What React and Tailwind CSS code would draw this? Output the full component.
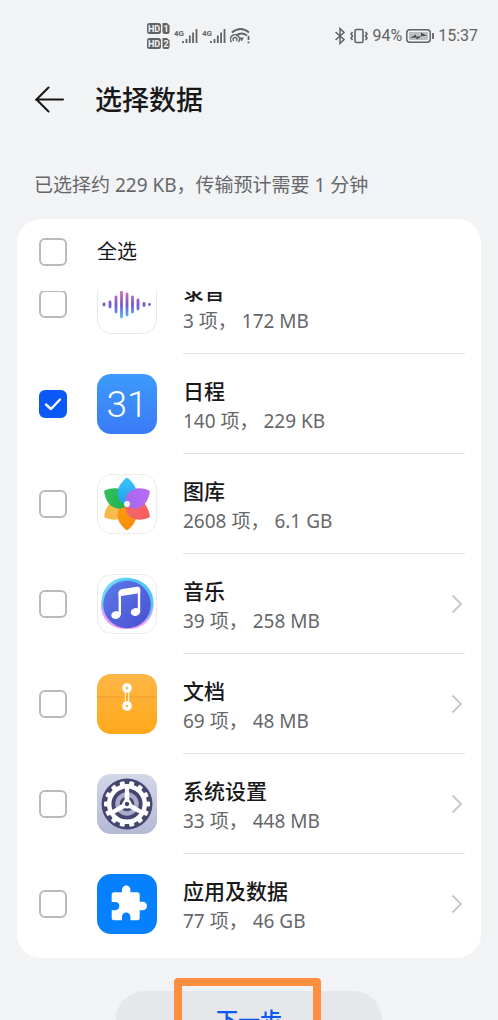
import React, { useState } from 'react';

const RecorderIcon = () => {
  const bars = [
    [7, 2], [13, 4], [19, 9], [24.5, 14], [30, 12], [35.5, 9], [41, 6], [47, 2.5], [52.5, 1.5]
  ];
  return (
    <svg viewBox="0 0 60 60" className="w-15 h-15 shrink-0">
      <defs>
        <linearGradient id="waveFill" gradientUnits="userSpaceOnUse" x1="0" y1="15" x2="0" y2="46">
          <stop offset="0" stopColor="#ee6fae" />
          <stop offset="0.5" stopColor="#7357d2" />
          <stop offset="1" stopColor="#4cc9fb" />
        </linearGradient>
      </defs>
      <rect x="0.5" y="0.5" width="59" height="59" rx="14" fill="#fff" stroke="#dfeaec" />
      {bars.map(([x, h]) => (
        <rect key={x} x={x - 1.4} y={30.5 - h} width="2.8" height={h * 2} rx="1.4" fill="url(#waveFill)" />
      ))}
    </svg>
  );
};

const CalendarIcon = () => (
  <svg viewBox="0 0 60 60" className="w-15 h-15 shrink-0">
    <defs>
      <linearGradient id="calendarFill" x1="0" y1="0" x2="0" y2="1">
        <stop offset="0" stopColor="#3d9bfb" />
        <stop offset="1" stopColor="#3a7af8" />
      </linearGradient>
    </defs>
    <rect width="60" height="60" rx="14" fill="url(#calendarFill)" />
    <text x="30" y="43" textAnchor="middle" fontSize="37" fontWeight="300" fill="#fff" className="font-['Roboto',sans-serif]">
      31
    </text>
  </svg>
);

const GalleryIcon = () => {
  const petals = [
    [240, '#f9b640', '#f3c65c'],
    [180, '#f98a08', '#fb9e14'],
    [120, '#fa5c5c', '#f2696d'],
    [300, '#35c15a', '#1faf50'],
    [0, '#38c4fb', '#239fe6'],
    [60, '#b96bf7', '#a767ee']
  ];
  return (
    <svg viewBox="0 0 60 60" className="w-15 h-15 shrink-0">
      <defs>
        {petals.map(([angle, from, to]) => (
          <linearGradient key={angle} id={`petal${angle}`} x1="0" y1="0" x2="0" y2="1">
            <stop offset="0" stopColor={from} />
            <stop offset="1" stopColor={to} />
          </linearGradient>
        ))}
      </defs>
      <rect x="0.5" y="0.5" width="59" height="59" rx="14" fill="#fff" stroke="#ededed" />
      {petals.map(([angle]) => (
        <path
          key={angle}
          d="M30 31C24 30 20.500 25 20.500 19C20.500 12.500 25 7.500 29 4.200Q30 3.400 31 4.200C35 7.500 39.500 12.500 39.500 19C39.500 25 36 30 30 31Z"
          transform={`rotate(${angle} 30 30)`}
          fill={`url(#petal${angle})`}
        />
      ))}
      <circle cx="30" cy="30" r="3" fill="#fff" />
    </svg>
  );
};

const MusicIcon = () => (
  <svg viewBox="0 0 60 60" className="w-15 h-15 shrink-0">
    <defs>
      <linearGradient id="musicFill" x1="0" y1="0" x2="1" y2="1">
        <stop offset="0" stopColor="#5a7be8" />
        <stop offset="1" stopColor="#4a4fd0" />
      </linearGradient>
    </defs>
    <rect x="0.5" y="0.5" width="59" height="59" rx="14" fill="#fff" stroke="#ededed" />
    <circle cx="27" cy="32" r="23" fill="#f29af5" />
    <circle cx="33" cy="31.5" r="23.5" fill="#f29af5" />
    <circle cx="28.5" cy="27.5" r="24" fill="#6fd3f8" />
    <circle cx="32.5" cy="28.5" r="24" fill="#56c4f6" />
    <circle cx="30" cy="30.5" r="23.8" fill="url(#musicFill)" />
    <path d="M22.8 41V18M42 37.5V15" fill="none" stroke="#fff" strokeWidth="2.4" />
    <path d="M21.600 19Q21.600 15.800 24.500 15.300L40 12.700Q43.200 12.300 43.200 15.500V19L21.600 22.500Z" fill="#fff" />
    <ellipse cx="19" cy="41" rx="4.8" ry="3.9" transform="rotate(-15 19 41)" fill="#fff" />
    <ellipse cx="38.5" cy="38" rx="4.8" ry="3.9" transform="rotate(-15 38.5 38)" fill="#fff" />
  </svg>
);

const DocumentsIcon = () => (
  <svg viewBox="0 0 60 60" className="w-15 h-15 shrink-0">
    <defs>
      <linearGradient id="documentsFill" x1="0" y1="0" x2="0" y2="1">
        <stop offset="0" stopColor="#fdb647" />
        <stop offset="1" stopColor="#ffa81a" />
      </linearGradient>
    </defs>
    <rect width="60" height="60" rx="14" fill="url(#documentsFill)" />
    <path d="M0 23H60" stroke="#ec9c2b" strokeWidth="1" />
    <path d="M28.3 14V31M31.7 14V31" stroke="#fff" strokeWidth="1" />
    <circle cx="30" cy="14" r="4.8" fill="#fff" />
    <circle cx="30" cy="32" r="4.8" fill="#fff" />
    <circle cx="30" cy="14" r="1.2" fill="#f5b04c" />
    <circle cx="30" cy="32" r="1.2" fill="#f5b04c" />
  </svg>
);

const SettingsIcon = () => (
  <svg viewBox="0 0 60 60" className="w-15 h-15 shrink-0">
    <defs>
      <linearGradient id="settingsFill" x1="0" y1="0" x2="0" y2="1">
        <stop offset="0" stopColor="#d3d7e9" />
        <stop offset="1" stopColor="#b4b9d4" />
      </linearGradient>
    </defs>
    <rect width="60" height="60" rx="14" fill="url(#settingsFill)" />
    <circle cx="30" cy="30" r="25.5" fill="#46456f" />
    {Array.from({ length: 14 }, (_, i) => (
      <rect
        key={i}
        x="27.5"
        y="7"
        width="5"
        height="6"
        rx="1"
        fill="#fff"
        transform={`rotate(${(i + 0.5) * (360 / 14)} 30 30)`}
      />
    ))}
    <circle cx="30" cy="30" r="17.8" fill="none" stroke="#fff" strokeWidth="4.4" />
    <circle cx="30" cy="30" r="9.5" fill="none" stroke="#a9acc8" strokeWidth="4.5" />
    {[0, 120, 240].map((angle) => (
      <path key={angle} d="M28 13H32L32.6 30H27.4Z" fill="#fff" transform={`rotate(${angle} 30 30)`} />
    ))}
    <circle cx="30" cy="30" r="4.6" fill="#fff" />
    <circle cx="30" cy="30" r="2.2" fill="#46456f" />
  </svg>
);

const AppsIcon = () => (
  <svg viewBox="0 0 60 60" className="w-15 h-15 shrink-0">
    <rect width="60" height="60" rx="14" fill="#0580ff" />
    <rect x="14.7" y="18.3" width="28" height="28" rx="2.5" fill="#fff" />
    <rect x="25" y="11.5" width="8.4" height="11" rx="4.2" fill="#fff" />
    <rect x="38" y="27.8" width="12" height="8.4" rx="4.2" fill="#fff" />
    <path d="M14 28H18.2A4.1 4.1 0 0 1 18.2 36.2H14Z" fill="#0580ff" />
    <path d="M25 47V42.8A4.2 4.2 0 0 1 33.4 42.8V47Z" fill="#0580ff" />
  </svg>
);

const items = [
  { id: 'recorder', name: '录音', count: '3', size: '172 MB', icon: RecorderIcon },
  { id: 'calendar', name: '日程', count: '140', size: '229 KB', icon: CalendarIcon },
  { id: 'gallery', name: '图库', count: '2608', size: '6.1 GB', icon: GalleryIcon },
  { id: 'music', name: '音乐', count: '39', size: '258 MB', icon: MusicIcon, more: true },
  { id: 'documents', name: '文档', count: '69', size: '48 MB', icon: DocumentsIcon, more: true },
  { id: 'settings', name: '系统设置', count: '33', size: '448 MB', icon: SettingsIcon, more: true },
  { id: 'apps', name: '应用及数据', count: '77', size: '46 GB', icon: AppsIcon, more: true }
];

const Checkbox = ({ id, checked, onChange }) => (
  <span className="relative w-7 h-7 shrink-0">
    <input
      id={id}
      type="checkbox"
      checked={checked}
      onChange={onChange}
      className="peer block w-7 h-7 appearance-none rounded-md border-2 border-[#bababa] bg-white checked:border-[#0a59f7] checked:bg-[#0a59f7]"
    />
    <svg viewBox="0 0 28 28" className="absolute inset-0 hidden pointer-events-none peer-checked:block">
      <path d="M7 14.5L12 19L21 9.5" fill="none" stroke="#fff" strokeWidth="2.4" strokeLinecap="round" strokeLinejoin="round" />
    </svg>
  </span>
);

const HdBadge = ({ sim }) => (
  <svg viewBox="0 0 23 11" className="w-[23px] h-[11px]">
    <rect width="14" height="11" rx="2.5" fill="#626365" />
    <text x="7" y="8.8" textAnchor="middle" fontSize="9" fontWeight="700" fill="#f1f3f5">HD</text>
    <path d="M15.5 0H20L22.5 2.5V9Q22.5 11 20.5 11H17.5Q15.5 11 15.5 9Z" fill="#626365" />
    <text x="19" y="8.8" textAnchor="middle" fontSize="9" fontWeight="700" fill="#f1f3f5">{sim}</text>
  </svg>
);

const Signal = () => (
  <svg viewBox="0 0 24 18" className="w-6 h-[18px]">
    <text x="0" y="9" fontSize="8" fontWeight="700" fill="#626365">4G</text>
    <path d="M9 16V14M12.5 16V12M15.8 16V8.500M19.1 16V5.500M22.5 16V2" stroke="#626365" strokeWidth="1.8" />
  </svg>
);

const StatusBar = () => (
  <div className="flex h-[72px] shrink-0 items-center justify-between pl-[147px] pr-5 text-[#626365] font-['Roboto',sans-serif]">
    <div className="flex items-center gap-1">
      <div className="flex flex-col gap-1">
        <HdBadge sim="1" />
        <HdBadge sim="2" />
      </div>
      <Signal />
      <Signal />
      <svg viewBox="0 0 22 18" className="w-[22px] h-[18px]" fill="none" stroke="#626365" strokeWidth="1.8">
        <path d="M2 5.5Q10.5 -1.5 19 5.5" />
        <path d="M6 8.5Q11.5 4.5 17 8.5" />
        <path d="M1.5 15A4.5 4.5 0 1 1 8.5 15M3.7 14A2 2 0 1 1 6.3 14" strokeWidth="1.4" />
        <path d="M9.5 10.5H14L11.5 14.5Z" fill="#626365" stroke="none" />
        <path d="M18.5 9V13M18.5 14.5V16.2" />
      </svg>
    </div>
    <div className="flex items-center gap-1">
      <svg viewBox="0 0 12 18" className="w-3 h-[18px]" fill="none" stroke="#626365" strokeWidth="1.5">
        <path d="M1.5 5L10 12.5L6 16.5V1.5L10 5.5L1.5 13" />
      </svg>
      <svg viewBox="0 0 18 16" className="w-[18px] h-4" fill="none" stroke="#626365" strokeWidth="1.6">
        <rect x="5" y="1.5" width="8" height="13" rx="1.5" />
        <path d="M2.5 4L1 6L2.5 8L1 10L2.5 12M15.5 4L17 6L15.5 8L17 10L15.5 12" />
      </svg>
      <span className="text-base leading-6">94%</span>
      <svg viewBox="0 0 28 14" className="w-7 h-3.5">
        <rect x="0.8" y="0.8" width="23.4" height="12.4" rx="3" fill="none" stroke="#626365" strokeWidth="1.5" />
        <rect x="3" y="3" width="19" height="8" rx="1" fill="#bdbec0" />
        <path d="M4 9L10 5.5V7.5H15V3.5L21 7H15.5V7.5L10.5 10.5V8.5Z" fill="#4a4b4d" />
        <path d="M27 4V10" stroke="#626365" strokeWidth="1.8" />
      </svg>
      <span className="text-base leading-6">15:37</span>
    </div>
  </div>
);

const App = () => {
  const [selected, setSelected] = useState(['calendar']);

  const toggle = (id) => {
    setSelected(selected.includes(id) ? selected.filter((i) => i !== id) : [...selected, id]);
  };

  const toggleAll = () => {
    setSelected(selected.length === items.length ? [] : items.map((i) => i.id));
  };

  return (
    <div className="flex flex-col h-screen overflow-hidden bg-[#f1f3f5] text-[#181819] font-['Noto_Sans','Noto_Sans_CJK_SC',sans-serif]">
      <StatusBar />

      <header className="flex h-14 shrink-0 items-center gap-[30px] pl-[35px]">
        <button aria-label="返回" className="w-[30px] h-[30px] shrink-0">
          <svg viewBox="0 0 30 30" fill="none" stroke="#181819" strokeWidth="2" strokeLinecap="round">
            <path d="M28 14.5H1.5L13.5 2.5M1.5 14.5L13.5 26.5" />
          </svg>
        </button>
        <h1 className="text-[27px] leading-10 font-medium">选择数据</h1>
      </header>

      <p className="mt-[43px] shrink-0 px-[34px] text-[19px] leading-7 text-[#66676a]">
        已选择约 229 KB，传输预计需要 1 分钟
      </p>

      <main className="mx-[17px] mt-5 shrink-0 rounded-[24px] bg-white pb-1">
        <div className="flex h-[66px] items-center gap-7 pl-[22px] mb-1.5">
          <Checkbox id="all" checked={selected.length === items.length} onChange={toggleAll} />
          <label htmlFor="all" className="pl-0.5 text-[20px] leading-[30px]">全选</label>
        </div>

        {/* Scrolled list */}
        <div className="overflow-hidden">
          <ul className="-mt-[37px]">
            {items.map(({ id, name, count, size, icon: Icon, more }) => (
              <li key={id} className="group flex h-[100px] items-center pl-[22px] pr-4">
                <Checkbox id={id} checked={selected.includes(id)} onChange={() => toggle(id)} />
                <label htmlFor={id} className="flex flex-1 h-full items-center pl-[30px]">
                  <Icon />
                  <span className="ml-[26px] flex flex-1 h-full items-center justify-between border-b border-[#e2e3e4] group-last:border-0">
                    <span className="flex flex-col pt-1">
                      <span className="text-[21px] leading-[30px] font-medium">{name}</span>
                      <span className="text-[19px] leading-[30px] text-[#66676a]">{count} 项， {size}</span>
                    </span>
                    {more && (
                      <svg viewBox="0 0 12 20" className="w-3 h-5 mr-0.5" fill="none" stroke="#c8c9ca" strokeWidth="2">
                        <path d="M1.5 1.5L10 10L1.5 18.5" />
                      </svg>
                    )}
                  </span>
                </label>
              </li>
            ))}
          </ul>
        </div>
      </main>

      <div className="relative mx-auto mt-[33px] w-[266px] shrink-0">
        <button className="w-full h-14 rounded-full bg-[#e5e7e8] text-[22px] leading-8 font-medium text-[#0a59f7]">
          下一步
        </button>
        <div className="absolute -top-[13px] left-[58px] h-20 w-[147px] rounded border-8 border-[#ff8f3f] pointer-events-none" />
      </div>
    </div>
  );
};

export default App;
